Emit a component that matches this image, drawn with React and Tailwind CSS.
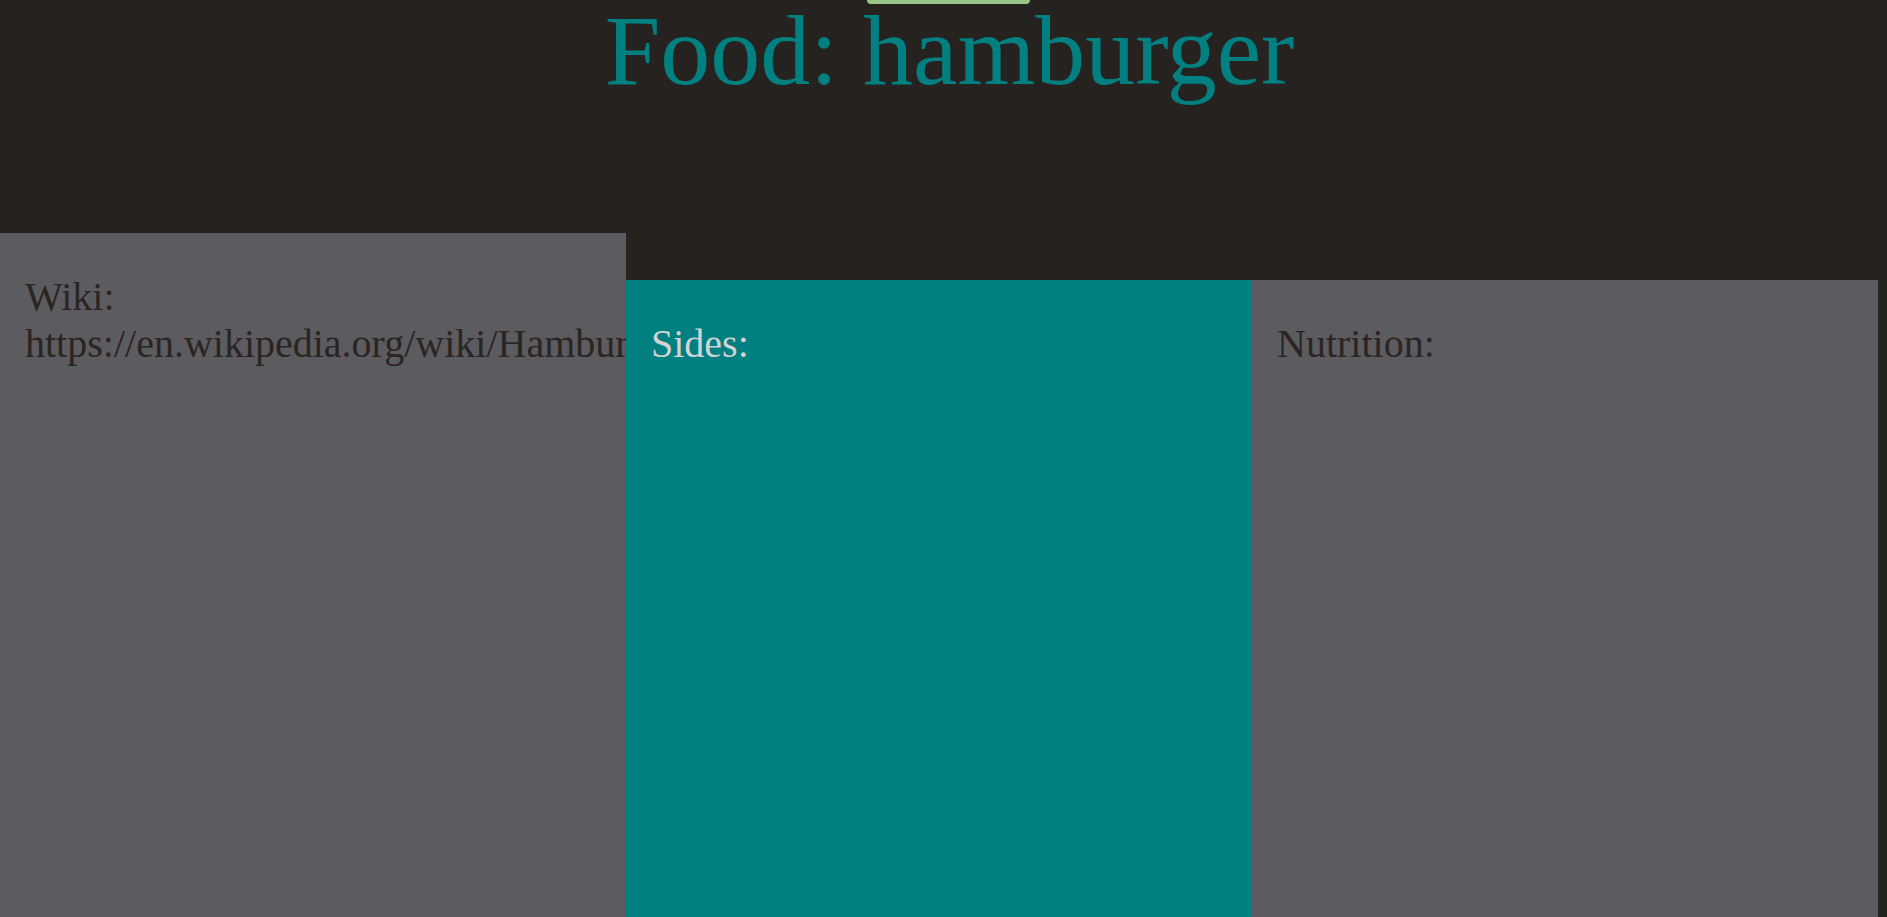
export default function App() {
    return (
        <div className="h-screen w-full overflow-hidden bg-[#262220] font-['Liberation_Serif','Times_New_Roman',serif]">
            {/* top button, mostly scrolled off */}
            <div className="flex justify-center">
                <div className="ml-[10px] h-[4px] w-[163px] rounded-b-[4px] bg-[#98c684]"></div>
            </div>

            {/* Title */}
            <h1 className="pl-[12px] text-center text-[100px] leading-[94px] text-[#008080]">
                Food: hamburger
            </h1>

            {/* Panels */}
            <div className="mt-[135px] flex items-start">
                <div className="h-[720px] w-[626px] overflow-hidden bg-[#5c5b60] px-[25px] pt-[40px] text-[40px] leading-[47px] text-[#2a2522]">
                    <p className="whitespace-nowrap">Wiki:</p>
                    <p className="whitespace-nowrap">https://en.wikipedia.org/wiki/Hamburger</p>
                </div>
                <div className="mt-[47px] h-[720px] w-[626px] bg-[#008080] px-[25px] pt-[40px] text-[40px] leading-[47px] text-[#d3d3d3]">
                    <p>Sides:</p>
                </div>
                <div className="mt-[47px] h-[720px] w-[626px] bg-[#5c5b60] px-[25px] pt-[40px] text-[40px] leading-[47px] text-[#2a2522]">
                    <p>Nutrition:</p>
                </div>
            </div>
        </div>
    );
}
